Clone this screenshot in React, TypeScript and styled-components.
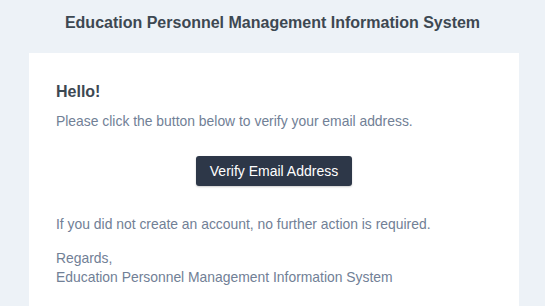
import styled, { createGlobalStyle } from 'styled-components'

const GlobalStyle = createGlobalStyle`
  html, body {
    margin: 0;
    padding: 0;
    background: #edf2f7;
  }
  body {
    font-family: "Liberation Sans", Arial, sans-serif;
  }
`

const Page = styled.div`
  width: 545px;
  height: 306px;
  overflow: hidden;
  display: flex;
  flex-direction: column;
  align-items: center;
`

const Header = styled.div`
  flex: none;
  height: 53px;
  display: flex;
  align-items: center;
  justify-content: center;
  color: #3d4852;
  font-size: 16px;
  font-weight: 700;
  padding-bottom: 8px;
  box-sizing: border-box;
`

const Card = styled.div`
  flex: 1;
  width: 490px;
  margin-left: 3px;
  background: #ffffff;
  padding: 29px 27px 40px;
  box-sizing: border-box;
`

const Greeting = styled.h1`
  margin: 0 0 10px;
  font-size: 16px;
  line-height: 20px;
  font-weight: 700;
  color: #3d4852;
`

const Paragraph = styled.p<{ $gap?: number }>`
  margin: 0 0 ${p => p.$gap ?? 15}px;
  font-size: 13.9px;
  line-height: 19px;
  color: #718096;
`

const ButtonRow = styled.div`
  display: flex;
  justify-content: center;
  margin: 25px 0 29px;
`

const Button = styled.a`
  display: inline-flex;
  align-items: center;
  justify-content: center;
  width: 156px;
  height: 30px;
  border-radius: 3px;
  background: #2d3748;
  color: #ffffff;
  font-size: 14px;
  text-decoration: none;
  box-shadow: 0 1px 2px rgba(0, 0, 0, 0.2);
`

export default function App() {
  return (
    <>
      <GlobalStyle />
      <Page>
        <Header>Education Personnel Management Information System</Header>
        <Card>
          <Greeting>Hello!</Greeting>
          <Paragraph $gap={0}>Please click the button below to verify your email address.</Paragraph>
          <ButtonRow>
            <Button href="#">Verify Email Address</Button>
          </ButtonRow>
          <Paragraph>If you did not create an account, no further action is required.</Paragraph>
          <Paragraph>
            Regards,<br />
            Education Personnel Management Information System
          </Paragraph>
        </Card>
      </Page>
    </>
  )
}
